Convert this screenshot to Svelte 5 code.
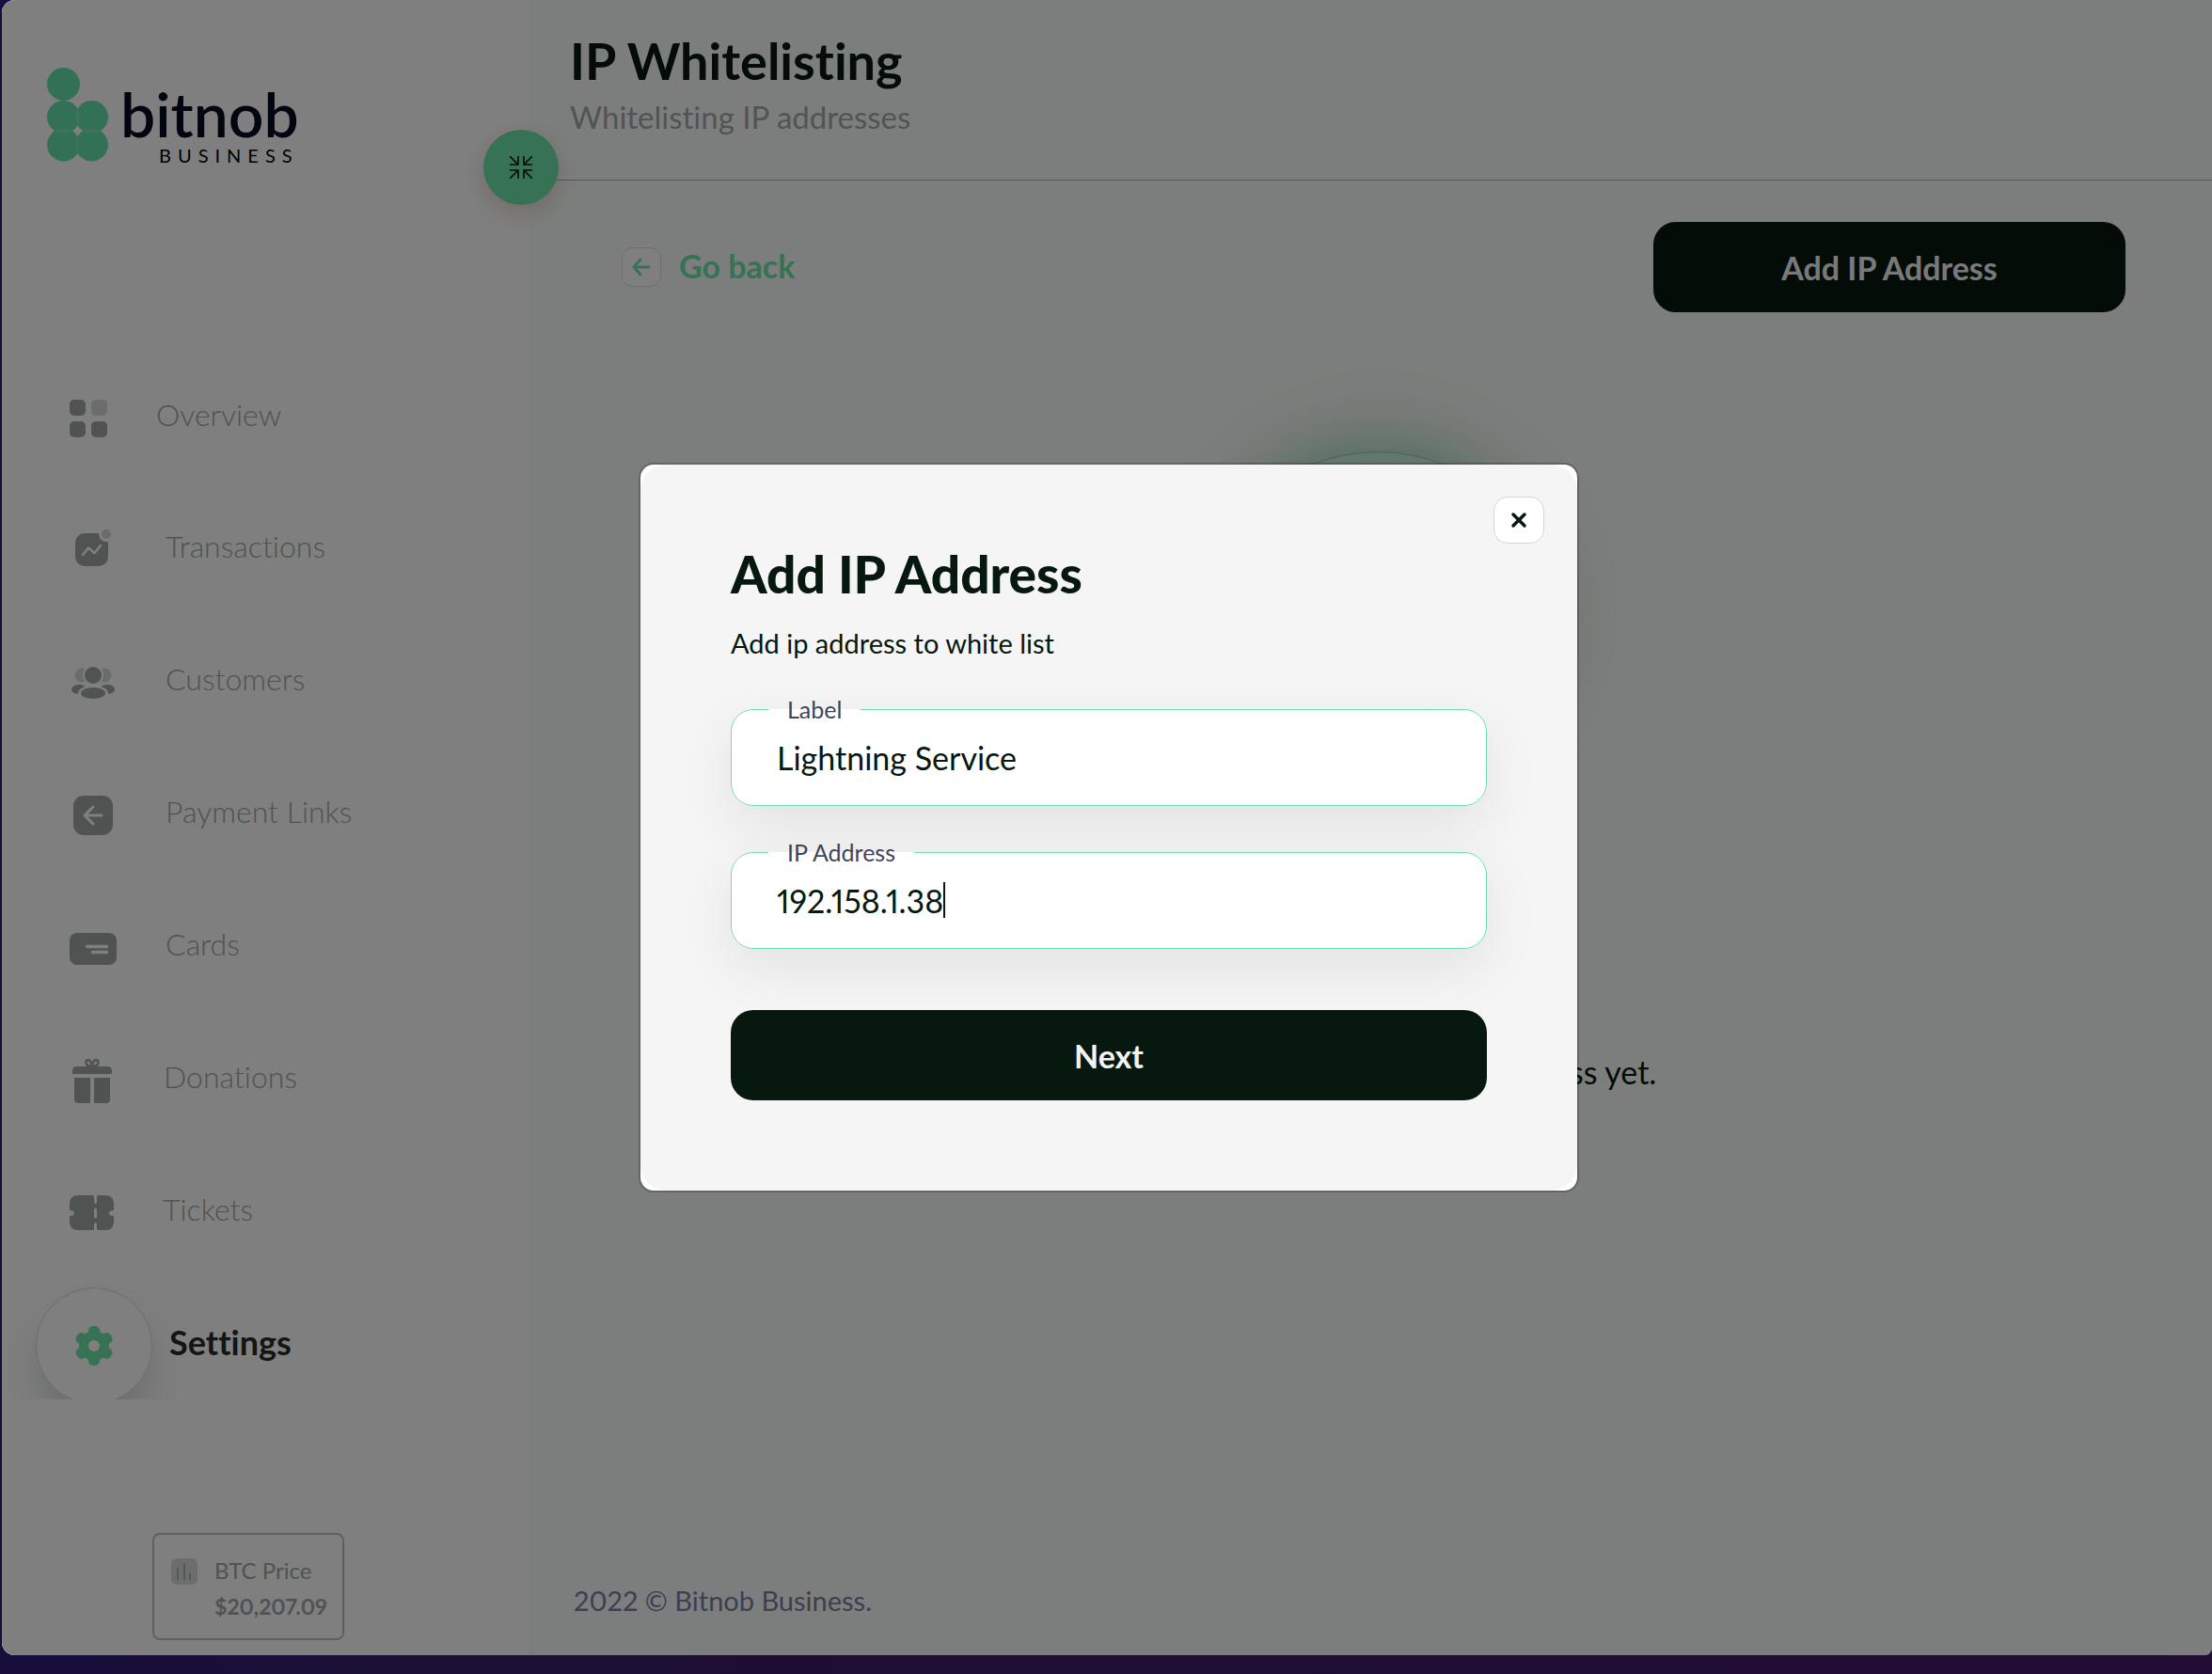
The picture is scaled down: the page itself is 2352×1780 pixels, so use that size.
<script>
 const navItems = [
     { name: 'Overview', icon: 'overview', width: 40 },
     { name: 'Transactions', icon: 'transactions', width: 50 },
     { name: 'Customers', icon: 'customers', width: 50 },
     { name: 'Payment Links', icon: 'links', width: 50 },
     { name: 'Cards', icon: 'cards', width: 50 },
     { name: 'Donations', icon: 'donations', width: 48 },
     { name: 'Tickets', icon: 'tickets', width: 47 },
     { name: 'Settings', icon: 'settings', width: 42, active: true },
 ];

 let label = 'Lightning Service';
 let ipAddress = '192.158.1.38';
 let showModal = true;
 let collapsed = false;
</script>

<svelte:head>
    <title>Bitnob Business | IP Whitelisting</title>
</svelte:head>

<div class="window">
    <aside class="sidebar">
        <div class="brand">
            <svg class="brandMark" width="48" height="102" viewBox="0 0 48 102" aria-hidden="true">
                <g fill="#67e2af">
                    <circle cx="17.500" cy="17.500" r="17.500" />
                    <circle cx="17.500" cy="52.500" r="17.500" />
                    <circle cx="47.500" cy="52.500" r="17.500" />
                    <circle cx="17.500" cy="82" r="17.500" />
                    <circle cx="47.500" cy="82" r="17.500" />
                </g>
                <g fill="#7ae6bb">
                    <path d="M32.500 43Q36.500 52.500 32.500 62Q28.500 52.500 32.500 43Z" />
                    <path d="M32.500 72.500Q36.500 82 32.500 91.500Q28.500 82 32.500 72.500Z" />
                    <path d="M8 67Q17.500 62.500 27 67Q17.500 72.500 8 67Z" />
                    <path d="M38 67Q47.500 62.500 57 67Q47.500 72.500 38 67Z" />
                </g>
            </svg>
            <div class="brandText">
                <span class="brandName">bitnob</span>
                <span class="brandSub">BUSINESS</span>
            </div>
        </div>

        <nav class="nav">
            <ul>
                {#each navItems as item}
                    <li>
                        <a class="navItem" class:active={item.active} href="#{item.icon}">
                            <span class="navIcon">
                                <svg width={item.width} height="50" viewBox="0 0 {item.width} 50" aria-hidden="true">
                                    {#if item.icon === 'overview'}
                                        <rect x="0" y="5" width="17" height="17" rx="5" />
                                        <rect x="23" y="5" width="17" height="17" rx="5" fill="#d8d9dc" />
                                        <rect x="0" y="28" width="17" height="17" rx="5" />
                                        <rect x="23" y="28" width="17" height="17" rx="5" />
                                    {:else if item.icon === 'transactions'}
                                        <rect x="6" y="7" width="35" height="35" rx="10" />
                                        <circle cx="39" cy="8" r="8" fill="#fff" />
                                        <circle cx="39" cy="8" r="5" fill="#d4d6d5" />
                                        <path d="M14 30l6-7.500 6.500 5.500 6.500-8" fill="none" stroke="#fff" stroke-width="2.500" stroke-linecap="round" stroke-linejoin="round" />
                                    {:else if item.icon === 'customers'}
                                        <circle cx="13" cy="17" r="7.500" fill="#d4d6d5" />
                                        <circle cx="37" cy="17" r="7.500" fill="#d4d6d5" />
                                        <ellipse cx="10" cy="32" rx="8" ry="5" />
                                        <ellipse cx="40" cy="32" rx="8" ry="5" />
                                        <circle cx="25" cy="17" r="11" fill="#fff" />
                                        <ellipse cx="25" cy="36" rx="16" ry="8" fill="#fff" />
                                        <circle cx="25" cy="17" r="9" />
                                        <ellipse cx="25" cy="36" rx="13" ry="6" />
                                    {:else if item.icon === 'links'}
                                        <rect x="4" y="4" width="42" height="42" rx="11" />
                                        <path d="M34 25H16M25 16l-9 9 9 9" fill="none" stroke="#fff" stroke-width="3" stroke-linecap="round" stroke-linejoin="round" />
                                    {:else if item.icon === 'cards'}
                                        <rect x="0" y="9" width="50" height="34" rx="8" />
                                        <path d="M18.500 23.500h21M24.500 29.500h15" stroke="#fff" stroke-width="3.500" stroke-linecap="round" />
                                    {:else if item.icon === 'donations'}
                                        <path d="M8 10h32q5 0 5 5v3H3v-3q0-5 5-5z" />
                                        <path d="M5 22h17v27H9q-4 0-4-4zM26 22h17v23q0 4-4 4H26z" />
                                        <path d="M23 10c-6 0-7-7-3.500-7 2.500 0 4 4 4.500 7 .5-3 2-7 4.500-7 3.500 0 2.500 7-3.500 7" fill="none" stroke="#9ea6a2" stroke-width="2.500" />
                                    {:else if item.icon === 'tickets'}
                                        <path d="M9 6h15.500q1.500 0 1.500 2v5q0 2 1.500 2t1.500-2V8q0-2 1.500-2H38q9 0 9 9v7q-5 0-5 3t5 3v6q0 9-9 9h-7.500q-1.500 0-1.500-2v-4q0-2-1.500-2t-1.500 2v4q0 2-1.500 2H9q-9 0-9-9v-6q5 0 5-3t-5-3v-7q0-9 9-9z" />
                                        <path d="M27.500 21v8" stroke="#fff" stroke-width="3" stroke-linecap="round" />
                                    {:else}
                                        <circle cx="21" cy="25" r="16" />
                                        <rect x="15" y="4" width="12" height="42" rx="5" />
                                        <rect x="15" y="4" width="12" height="42" rx="5" transform="rotate(60 21 25)" />
                                        <rect x="15" y="4" width="12" height="42" rx="5" transform="rotate(120 21 25)" />
                                        <circle cx="21" cy="25" r="6" fill="#fff" />
                                    {/if}
                                </svg>
                            </span>
                            <span class="navName">{item.name}</span>
                        </a>
                    </li>
                {/each}
            </ul>
        </nav>

        <div class="price">
            <svg width="28" height="28" viewBox="0 0 28 28" aria-hidden="true">
                <rect width="28" height="28" rx="6" fill="#d8dcda" />
                <path d="M7 11v11M14 6v16M20 16v6" stroke="#a8afab" stroke-width="2" stroke-linecap="round" />
            </svg>
            <div>
                <div class="priceName">BTC Price</div>
                <div class="priceValue">$20,207.09</div>
            </div>
        </div>

        <button class="toggle" aria-label="Collapse menu" on:click={() => collapsed = !collapsed}>
            <svg width="24" height="24" viewBox="0 0 24 24" fill="none" stroke="#07180f" stroke-width="1.600" aria-hidden="true">
                <path d="M0 0l9 9M0 9h9V0M24 0l-9 9M24 9h-9V0M0 24l9-9M0 15h9v9M24 24l-9-9M24 15h-9v9" />
            </svg>
        </button>
    </aside>

    <main class="main">
        <header class="header">
            <h1>IP Whitelisting</h1>
            <p>Whitelisting IP addresses</p>
        </header>

        <div class="actions">
            <a class="back" href="#settings">
                <span class="backIcon">
                    <svg width="20" height="20" viewBox="0 0 20 20" fill="none" stroke="#6ee4aa" stroke-width="3" stroke-linecap="round" stroke-linejoin="round" aria-hidden="true">
                        <path d="M18 10H2M9 2l-7 8 7 8" />
                    </svg>
                </span>
                <span class="backName">Go back</span>
            </a>
            <button class="primary addButton" on:click={() => showModal = true}>Add IP Address</button>
        </div>

        <div class="empty">
            <div class="emptyCircle"></div>
            <p>You have not added any IP address yet.</p>
        </div>

        <footer class="footer">2022 © Bitnob Business.</footer>
    </main>

    {#if showModal}
        <div class="overlay">
            <div class="modal" role="dialog" aria-modal="true" aria-labelledby="modalTitle">
                <form class="modalBody" on:submit|preventDefault>
                    <h2 id="modalTitle">Add IP Address</h2>
                    <p>Add ip address to white list</p>

                    <fieldset>
                        <legend><label for="label">Label</label></legend>
                        <input id="label" type="text" bind:value={label} />
                    </fieldset>

                    <fieldset>
                        <legend><label for="ip">IP Address</label></legend>
                        <input id="ip" type="text" bind:value={ipAddress} />
                        <span class="caret"></span>
                    </fieldset>

                    <button class="primary" type="submit">Next</button>
                </form>
                <button class="close" aria-label="Close" on:click={() => showModal = false}>
                    <svg width="18" height="18" viewBox="0 0 18 18" stroke="#07180f" stroke-width="3.500" stroke-linecap="round" aria-hidden="true">
                        <path d="M3 3l12 12M15 3L3 15" />
                    </svg>
                </button>
            </div>
        </div>
    {/if}
</div>

<style>
 :global(body) {
     margin: 0;
     background: linear-gradient(90deg, #170e3d, #1b0f33 20%, #220c33);
     font-family: 'Lato', 'Open Sans', sans-serif;
     font-variant-ligatures: none;
     font-variant-numeric: proportional-nums;
     color: #07180f;
 }

 .window {
     position: relative;
     display: flex;
     height: calc(100vh - 20px);
     margin: 0 0 20px 2px;
     border-radius: 14px 0 8px 14px;
     overflow: hidden;
     background-color: #f8fdfa;
 }

 h1, h2, p, ul {
     margin: 0;
     padding: 0;
 }

 button, input {
     font-family: inherit;
     font-variant-ligatures: inherit;
     font-variant-numeric: inherit;
 }

 .sidebar {
     position: relative;
     z-index: 1;
     display: flex;
     flex-direction: column;
     flex: none;
     width: 560px;
     background-color: #fff;
 }

 .brand {
     display: flex;
     gap: 30px;
     height: 304px;
     padding: 72px 0 0 48px;
 }

 .brandMark {
     overflow: visible;
 }

 .brandText {
     display: flex;
     flex-direction: column;
     padding-top: 14px;
     color: #020a1e;
 }

 .brandName {
     font-size: 66px;
     font-weight: 600;
     line-height: 70px;
 }

 .brandSub {
     align-self: flex-end;
     font-size: 20px;
     line-height: 18px;
     letter-spacing: 7px;
     color: #000;
 }

 .nav {
     flex: 1;
     min-height: 0;
     overflow: hidden;
 }

 .nav ul {
     list-style: none;
 }

 .navItem {
     display: flex;
     align-items: center;
     gap: 52px;
     height: 141px;
     padding-left: 72px;
     color: #9ea6a2;
     fill: #9ea6a2;
     font-size: 32px;
     font-weight: 300;
     line-height: 40px;
     text-decoration: none;
 }

 li:first-child .navItem {
     height: 138px;
 }

 .navIcon {
     display: flex;
     align-items: center;
     justify-content: center;
 }

 .navName {
     padding-bottom: 8px;
 }

 .active {
     gap: 18px;
     padding-left: 36px;
     color: #2b2b2b;
     fill: #6ee4aa;
     font-size: 36px;
     font-weight: 700;
 }

 .active .navIcon {
     width: 122px;
     height: 122px;
     border: 1px solid #d8dad9;
     border-radius: 50%;
     background-color: #fff;
     box-shadow: 0 24px 40px rgba(7, 50, 30, 0.16);
 }

 .price {
     display: flex;
     gap: 18px;
     align-self: flex-start;
     margin: 142px 0 16px 160px;
     padding: 25px 16px 22px 18px;
     border: 2px solid #bcc0be;
     border-radius: 8px;
     color: #9ea6a2;
     font-size: 24px;
     line-height: 26px;
 }

 .priceValue {
     padding-top: 13px;
     font-size: 23px;
     font-weight: 700;
     line-height: 24px;
 }

 .toggle {
     position: absolute;
     top: 138px;
     right: -32px;
     display: flex;
     align-items: center;
     justify-content: center;
     width: 80px;
     height: 80px;
     border: none;
     border-radius: 50%;
     background-color: #70e4aa;
     box-shadow: 0 8px 24px rgba(120, 60, 20, 0.2);
 }

 .main {
     display: flex;
     flex-direction: column;
     flex: 1;
 }

 .header {
     height: 158px;
     padding: 33px 44px 0;
     border-bottom: 1px solid #b0b2b1;
 }

 .header h1 {
     font-size: 54px;
     line-height: 64px;
 }

 .header p {
     font-size: 33px;
     line-height: 54px;
     color: #a6a6a6;
 }

 .actions {
     display: flex;
     align-items: center;
     justify-content: space-between;
     padding: 44px 92px 0 99px;
 }

 .back {
     display: flex;
     align-items: center;
     gap: 19px;
     color: #6ee4aa;
     font-size: 34px;
     font-weight: 700;
     text-decoration: none;
 }

 .backIcon {
     display: flex;
     align-items: center;
     justify-content: center;
     width: 40px;
     height: 40px;
     border: 1px solid #dcdcdc;
     border-radius: 12px;
     background-color: #fff;
 }

 .backName {
     padding-bottom: 4px;
 }

 .primary {
     height: 96px;
     border: none;
     border-radius: 24px;
     background-color: #07180f;
     color: #f3f3f6;
     font-size: 34px;
     font-weight: 700;
 }

 .addButton {
     width: 502px;
 }

 .empty {
     display: flex;
     flex: 1;
     flex-direction: column;
     align-items: center;
     padding: 148px 0 0 16px;
     font-size: 34px;
 }

 .empty p {
     padding-left: 14px;
 }

 .emptyCircle {
     width: 376px;
     height: 376px;
     margin-bottom: 261px;
     border: 1px solid #a0c0ae;
     border-radius: 50%;
     background-color: #c4f0d4;
     box-shadow: 0 -12px 70px -12px rgba(70, 200, 130, 0.65), 0 -20px 120px rgba(220, 160, 160, 0.15);
 }

 .footer {
     padding: 0 48px 40px;
     font-size: 29px;
     line-height: 36px;
     color: #7c7c9c;
 }

 .overlay {
     position: absolute;
     inset: 0;
     z-index: 2;
     display: flex;
     align-items: center;
     justify-content: center;
     padding-left: 4px;
     background-color: rgba(0, 0, 0, 0.5);
 }

 .modal {
     position: relative;
     width: 996px;
     border: 2px solid rgba(0, 0, 0, 0.2);
     border-radius: 16px;
     background-color: #fff;
     background-clip: padding-box;
 }

 .modalBody {
     display: flex;
     flex-direction: column;
     padding: 84px 96px 96px;
     border-radius: 28px;
     background-color: #f5f5f5;
 }

 .modalBody h2 {
     font-size: 55px;
     font-weight: 900;
     line-height: 64px;
 }

 .modalBody p {
     margin: 24px 0 37px;
     font-size: 29px;
     line-height: 36px;
 }

 fieldset {
     display: flex;
     margin: 0 0 34px;
     padding: 17px 48px 30px;
     border: 1px solid #6fdfa9;
     border-radius: 24px;
     background-color: #fff;
     box-shadow: 0 20px 60px rgba(0, 0, 0, 0.08);
 }

 fieldset:last-of-type {
     margin-bottom: 65px;
 }

 legend {
     margin-left: -9px;
     padding: 0 20px;
     font-size: 25px;
     line-height: 30px;
     color: #3f4559;
 }

 input {
     field-sizing: content;
     height: 40px;
     padding: 0;
     border: none;
     outline: none;
     background: none;
     color: #07180f;
     font-size: 34px;
     line-height: 40px;
 }

 .caret {
     width: 2px;
     height: 38px;
     background-color: #07180f;
 }

 .close {
     position: absolute;
     top: 34px;
     right: 35px;
     display: flex;
     align-items: center;
     justify-content: center;
     width: 54px;
     height: 50px;
     border: 1px solid #d6d6d6;
     border-radius: 15px;
     background-color: #fff;
 }
</style>
